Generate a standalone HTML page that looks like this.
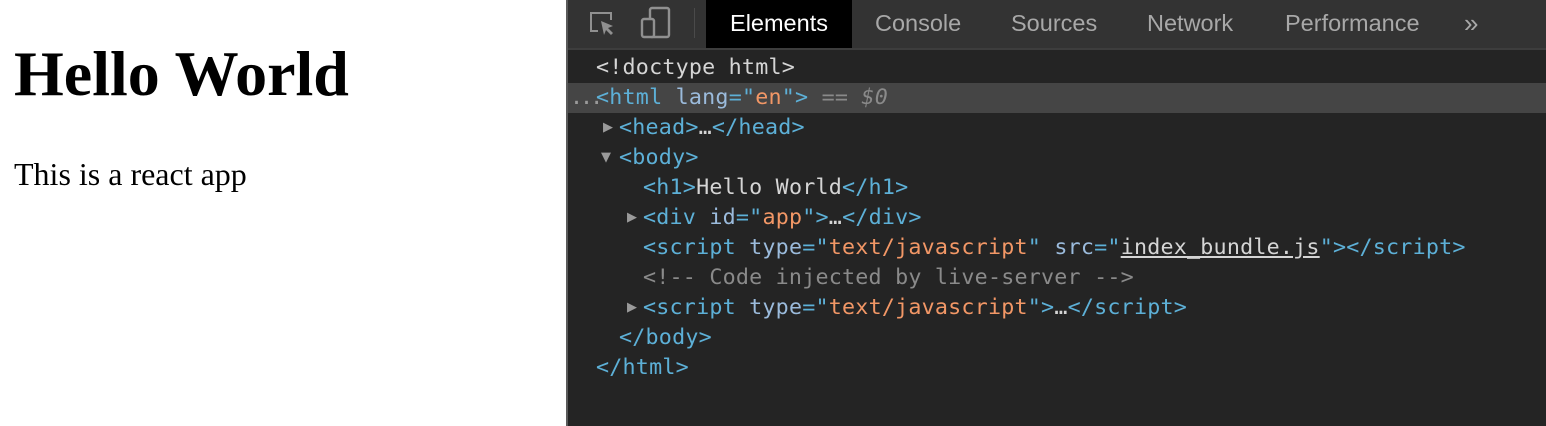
<!DOCTYPE html>
<html><head><style>
body{margin:0;width:1546px;height:426px;overflow:hidden;background:#fff;position:relative;font-family:"Liberation Serif",serif}
.h1{position:absolute;left:14px;top:38px;font-size:64px;font-weight:bold;line-height:72px;margin:0;white-space:nowrap}
.p{position:absolute;left:14px;top:156px;font-size:32px;line-height:36px;white-space:nowrap}
.dt{position:absolute;left:566px;top:0;width:980px;height:426px;background:#242424;border-left:2px solid #5a5a5a;box-sizing:border-box}
.tb{position:absolute;left:0;top:0;width:100%;height:48px;background:#333;border-bottom:2px solid #3d3d3d}
.tab{position:absolute;top:0;height:48px;line-height:46px;font-family:"Liberation Sans",sans-serif;font-size:23.5px;color:#a8a8a8;white-space:nowrap}
.sel{background:#000;color:#fff;left:138px;width:146px;text-align:center}
.code{position:absolute;left:0;top:53px;width:100%;font-family:"DejaVu Sans Mono",monospace;font-size:21.7px;letter-spacing:0.21px;color:#d5d5d5}
.l{height:30px;line-height:30px;white-space:pre;position:relative;padding-left:28px}
.l1{padding-left:51px}.l2{padding-left:75px}
.t{color:#5db0d7}.a{color:#9bbbdc}.v{color:#f29766}.c{color:#8a8a8a}
.hl{background:#454545}
.tri{position:absolute;top:0;font-size:13px;color:#9a9a9a;font-family:"DejaVu Sans",sans-serif;letter-spacing:0}
.dots{position:absolute;left:2px;color:#9a9a9a;letter-spacing:-3px}
</style></head><body>
<div class="h1">Hello World</div>
<div class="p">This is a react app</div>
<div class="dt">
<div class="tb">
<svg style="position:absolute;left:20px;top:10px" width="30" height="28" viewBox="0 0 30 28" fill="none" stroke="#909090" stroke-width="2"><path d="M10 21H3V3h20v7"/><path d="M13 11l12 5-5 2 5 5-2 2-5-5-2 5z" fill="#909090" stroke="none"/></svg>
<svg style="position:absolute;left:72px;top:6px" width="32" height="34" viewBox="0 0 32 34" fill="none" stroke="#909090" stroke-width="2.4"><rect x="10" y="2" width="19" height="29" rx="2"/><rect x="2" y="13" width="12" height="18" rx="2" fill="#333"/></svg>
<div style="position:absolute;left:126px;top:8px;width:1px;height:30px;background:#4a4a4a"></div>
<div class="tab sel">Elements</div>
<div class="tab" style="left:307px">Console</div>
<div class="tab" style="left:443px">Sources</div>
<div class="tab" style="left:579px">Network</div>
<div class="tab" style="left:717px">Performance</div>
<div class="tab" style="left:896px;font-size:26px">»</div>
</div>
<div class="code">
<div class="l">&lt;!doctype html&gt;</div>
<div class="l hl"><span class="dots">...</span><span class="t">&lt;html </span><span class="a">lang</span><span class="t">="</span><span class="v">en</span><span class="t">"&gt;</span> <span class="c">== <i>$0</i></span></div>
<div class="l l1"><span class="tri" style="left:35px">▶</span><span class="t">&lt;head&gt;</span>…<span class="t">&lt;/head&gt;</span></div>
<div class="l l1"><span class="tri" style="left:33px">▼</span><span class="t">&lt;body&gt;</span></div>
<div class="l l2"><span class="t">&lt;h1&gt;</span>Hello World<span class="t">&lt;/h1&gt;</span></div>
<div class="l l2"><span class="tri" style="left:59px">▶</span><span class="t">&lt;div </span><span class="a">id</span><span class="t">="</span><span class="v">app</span><span class="t">"&gt;</span>…<span class="t">&lt;/div&gt;</span></div>
<div class="l l2"><span class="t">&lt;script </span><span class="a">type</span><span class="t">="</span><span class="v">text/javascript</span><span class="t">" </span><span class="a">src</span><span class="t">="</span><span style="text-decoration:underline">index_bundle.js</span><span class="t">"&gt;&lt;/script&gt;</span></div>
<div class="l l2 c">&lt;!-- Code injected by live-server --&gt;</div>
<div class="l l2"><span class="tri" style="left:59px">▶</span><span class="t">&lt;script </span><span class="a">type</span><span class="t">="</span><span class="v">text/javascript</span><span class="t">"&gt;</span>…<span class="t">&lt;/script&gt;</span></div>
<div class="l l1"><span class="t">&lt;/body&gt;</span></div>
<div class="l"><span class="t">&lt;/html&gt;</span></div>
</div>
</div>
</body></html>
